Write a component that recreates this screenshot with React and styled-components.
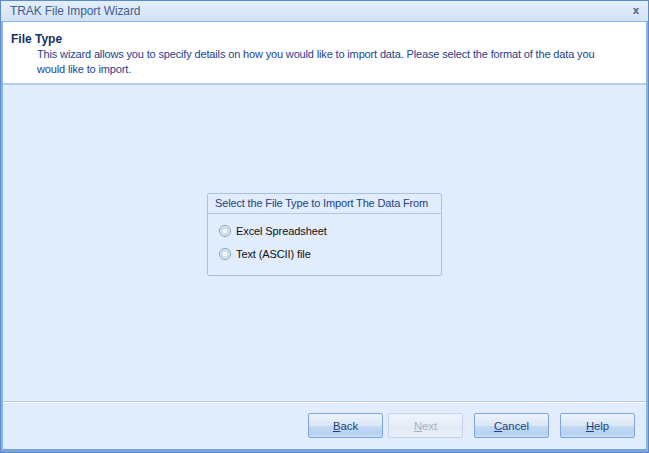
import React from 'react'
import styled, { createGlobalStyle } from 'styled-components';

const Global = createGlobalStyle`
  html, body { margin:0; padding:0; background:#fff; }
  body { font-family:"Liberation Sans", Arial, sans-serif; font-size:11px; }
`;

const Window = styled.div`
  width:649px;
  height:453px;
  box-sizing:border-box;
  display:flex;
  flex-direction:column;
  border:1px solid #5b8bc9;
  background:#dce8f8;
`;
const TitleBar = styled.div`
  height:20px;
  flex:none;
  display:flex;
  align-items:center;
  justify-content:space-between;
  padding:0 9px 0 9px;
  background:linear-gradient(#e4eefb, #d3e2f6);
  color:#3f5f8f;
  font-size:12px;
  letter-spacing:-0.1px;
`;
const Close = styled.span`
  font-family:"DejaVu Sans", sans-serif;
  font-weight:700;
  font-size:10px;
  color:#566c8c;
  margin-top:-1px;
`;
const Frame = styled.div`
  flex:1;
  display:flex;
  flex-direction:column;
  border:2px solid #8fb3e4;
  border-top:1px solid #8fb3e4;
  border-bottom:3px solid #7aa4dc;
  background:#e1ecfc;
`;
const Header = styled.div`
  height:63px;
  flex:none;
  box-sizing:border-box;
  background:#fff;
  border-bottom:2px solid #b4cdee;
  padding:10px 0 0 8px;
  color:#1d3f8c;
`;
const HeaderTitle = styled.div`
  font-weight:700;
  font-size:12px;
  color:#15306b;
  line-height:15px;
`;
const HeaderText = styled.div`
  padding:0 42px 0 26px;
  line-height:15px;
  font-size:11px;
  letter-spacing:-0.15px;
`;
const Main = styled.div`
  flex:1;
  display:flex;
  align-items:center;
  justify-content:center;
  padding-bottom:17px;
`;
const Group = styled.div`
  width:235px;
  height:83px;
  box-sizing:border-box;
  border:1px solid #a6c2e6;
  border-radius:2px;
  display:flex;
  flex-direction:column;
`;
const GroupTitle = styled.div`
  height:20px;
  box-sizing:border-box;
  border-bottom:1px solid #b0c8e8;
  padding:3px 0 0 7px;
  color:#21428a;
  font-size:11px;
  letter-spacing:-0.15px;
`;
const Options = styled.div`
  display:flex;
  flex-direction:column;
  gap:7px;
  padding:9px 0 0 11px;
`;
const Option = styled.label`
  display:flex;
  align-items:center;
  gap:5px;
  color:#111;
  font-size:11px;
  letter-spacing:-0.1px;
  height:16px;
`;
const Radio = styled.span`
  width:12px;
  height:12px;
  border-radius:50%;
  box-sizing:border-box;
  border:1px solid #7f9ec4;
  background:radial-gradient(circle, #f7fafd 0 2px, #b9cfea 3px, #d6e3f3 4px, #f2f6fb 5px);
`;
const Footer = styled.div`
  height:48px;
  flex:none;
  box-sizing:border-box;
  border-top:1px solid #b7cae3;
  box-shadow:inset 0 1px 0 #fff;
  display:flex;
  justify-content:flex-end;
  align-items:flex-start;
  padding:11px 11px 0 0;
`;
const ButtonRow = styled.div`
  display:flex;
  gap:11px;
`;
const Button = styled.button`
  width:75px;
  height:25px;
  box-sizing:border-box;
  margin-left:${p => p.$tight ? '-6px' : '0'};
  border:1px solid ${p => p.disabled ? '#c3d4ea' : '#7ea6dc'};
  border-radius:2px;
  font-family:"Liberation Sans", Arial, sans-serif;
  font-size:11.3px;
  color:${p => p.disabled ? '#a3b3c9' : '#1f3f7f'};
  background:${p => p.disabled
    ? 'linear-gradient(#eef3fb, #e7eef8 50%, #e0e9f6 51%, #e8eff9)'
    : 'linear-gradient(#edf3fb, #dbe7f7 50%, #c4dbf4 51%, #b5d3f3 85%, #c9e0f7)'};
  padding:0;
  u { text-decoration:underline; }
`;

const App = () => {
  return (
    <>
      <Global />
      <Window>
        <TitleBar>
          <span>TRAK File Import Wizard</span>
          <Close>x</Close>
        </TitleBar>
        <Frame>
          <Header>
            <HeaderTitle>File Type</HeaderTitle>
            <HeaderText>
              This wizard allows you to specify details on how you would like to import data. Please select the format of the data you would like to import.
            </HeaderText>
          </Header>
          <Main>
            <Group>
              <GroupTitle>Select the File Type to Import The Data From</GroupTitle>
              <Options>
                <Option><Radio />Excel Spreadsheet</Option>
                <Option><Radio />Text (ASCII) file</Option>
              </Options>
            </Group>
          </Main>
          <Footer>
            <ButtonRow>
              <Button><u>B</u>ack</Button>
              <Button disabled $tight><u>N</u>ext</Button>
              <Button><u>C</u>ancel</Button>
              <Button><u>H</u>elp</Button>
            </ButtonRow>
          </Footer>
        </Frame>
      </Window>
    </>
  )
}

export default App
